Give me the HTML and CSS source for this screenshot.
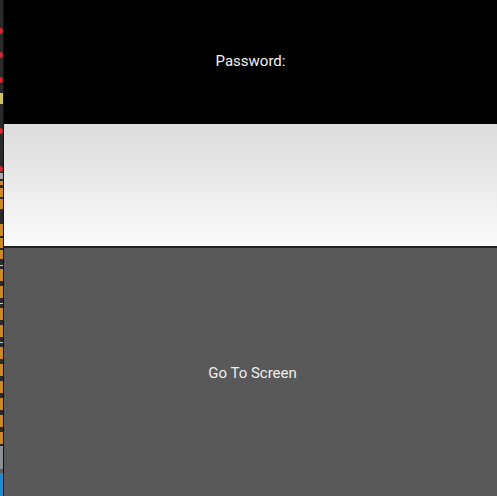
FILE: index.html
```html
<!DOCTYPE html>
<html>
<head>
<meta charset="utf-8">
<link rel="stylesheet" href="styles.css">
</head>
<body>
<div class="app">
  <div class="strip">
    <div class="mark red" style="margin-top:28px"></div>
    <div class="mark red" style="margin-top:18px"></div>
    <div class="mark red" style="margin-top:19px"></div>
    <div class="mark yellow" style="margin-top:10px"></div>
    <div class="mark red" style="margin-top:24px"></div>
    <div class="mark red" style="margin-top:32px"></div>
    <div class="mark gray" style="margin-top:1px"></div>
    <div class="mark orange" style="margin-top:2px;height:4px"></div>
    <div class="mark orange" style="margin-top:3px;height:9px"></div>
    <div class="mark orange" style="margin-top:2px;height:10px"></div>
    <div class="mark orange" style="margin-top:15px;height:12px"></div>
    <div class="mark orange" style="margin-top:2px;height:10px"></div>
    <div class="mark orange" style="margin-top:2px;height:9px"></div>
    <div class="mark tick" style="margin-top:6px"></div>
    <div class="mark orange" style="margin-top:3px;height:12px"></div>
    <div class="mark orange" style="margin-top:5px;height:12px"></div>
    <div class="mark tick" style="margin-top:5px"></div>
    <div class="mark orange" style="margin-top:4px;height:12px"></div>
    <div class="mark orange" style="margin-top:5px;height:12px"></div>
    <div class="mark tick" style="margin-top:5px"></div>
    <div class="mark orange" style="margin-top:4px;height:12px"></div>
    <div class="mark orange" style="margin-top:5px;height:12px"></div>
    <div class="mark orange" style="margin-top:5px;height:12px"></div>
    <div class="mark orange" style="margin-top:5px;height:12px"></div>
    <div class="mark orange" style="margin-top:5px;height:12px"></div>
    <div class="mark orange" style="margin-top:5px;height:12px"></div>
    <div class="mark lightgray" style="margin-top:2px;height:23px"></div>
    <div class="mark midgray" style="height:4px"></div>
    <div class="mark blue"></div>
  </div>
  <div class="main">
    <div class="label">Password:</div>
    <div class="input"></div>
    <div class="button">Go To Screen</div>
  </div>
</div>
</body>
</html>
```
FILE: styles.css
```css
html, body {
  margin: 0;
  padding: 0;
  background: #000;
}
.app {
  display: flex;
  width: 497px;
  height: 496px;
  overflow: hidden;
  font-family: Roboto, "Liberation Sans", sans-serif;
}
.strip {
  width: 3px;
  background: #2a2a2a;
  border-right: 1px solid #111;
  display: flex;
  flex-direction: column;
  flex-shrink: 0;
}
.mark {
  width: 3px;
  height: 6px;
  flex-shrink: 0;
}
.red { background: #e0242a; border-radius: 0 3px 3px 0; }
.yellow { background: #d2c257; height: 11px; }
.gray { background: #a8a8a8; }
.orange { background: #d08a1a; }
.tick { background: #b8c8e0; height: 1px; }
.lightgray { background: #8c9096; }
.midgray { background: #5a5e62; }
.blue { background: #1a8fd0; flex: 1; }
.main {
  flex: 1;
  display: flex;
  flex-direction: column;
}
.label {
  height: 122px;
  padding-bottom: 2px;
  background: #000;
  color: #f2f2f2;
  font-size: 15px;
  display: flex;
  align-items: center;
  justify-content: center;
}
.input {
  height: 122px;
  background: linear-gradient(#dcdcdc, #fafafa);
  border-bottom: 2px solid #222;
}
.button {
  flex: 1;
  background: #595959;
  color: #eeeeee;
  font-size: 15px;
  padding-left: 4px;
  padding-top: 2px;
  display: flex;
  align-items: center;
  justify-content: center;
}
```
